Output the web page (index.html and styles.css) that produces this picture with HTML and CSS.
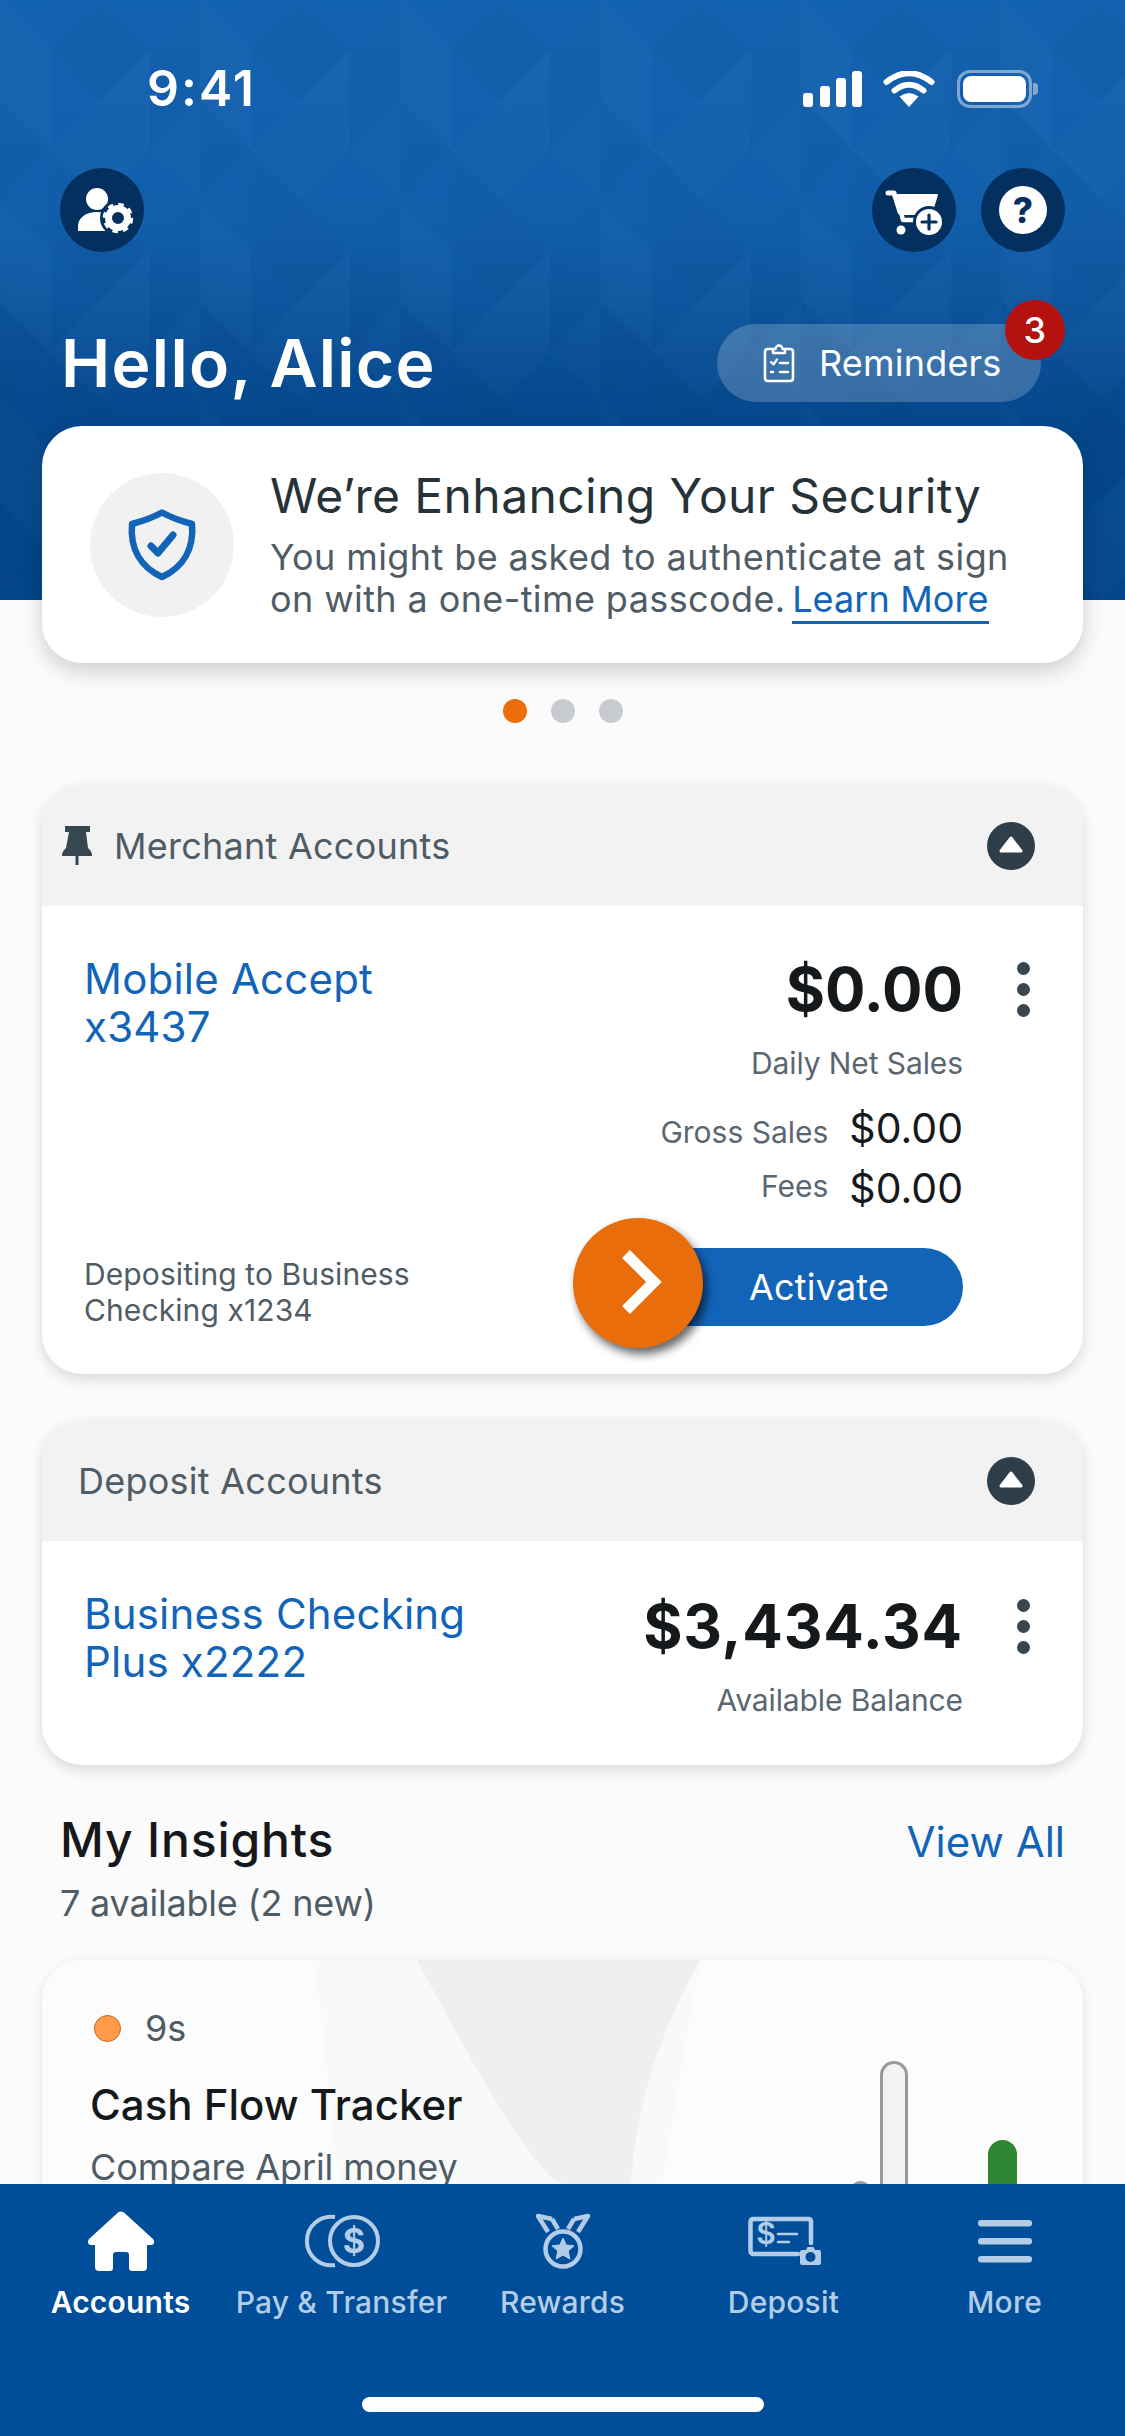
FILE: index.html
```html
<!DOCTYPE html>
<html lang="en">
<head>
<meta charset="utf-8">
<title>Accounts</title>
<link rel="stylesheet" href="styles.css">
</head>
<body>
<div class="app">
  <main class="scroll">
    <header class="hero">
      <svg class="hero-texture" width="1125" height="600" aria-hidden="true">
        <defs>
          <pattern id="facets" width="260" height="260" patternUnits="userSpaceOnUse" patternTransform="scale(.77)">
            <polygon points="130,0 195,65 130,130 65,65" fill="#000" fill-opacity=".028"/>
            <polygon points="0,130 65,65 65,195" fill="#fff" fill-opacity=".018"/>
            <polygon points="260,130 195,65 195,195" fill="#000" fill-opacity=".024"/>
            <polygon points="130,130 195,195 130,260 65,195" fill="#fff" fill-opacity=".016"/>
            <polygon points="0,0 65,65 0,130" fill="#fff" fill-opacity=".014"/>
            <polygon points="260,0 195,65 260,130" fill="#000" fill-opacity=".016"/>
            <polygon points="0,130 65,195 0,260" fill="#000" fill-opacity=".02"/>
            <polygon points="260,130 260,260 195,195" fill="#fff" fill-opacity=".012"/>
            <polygon points="65,0 130,0 65,65" fill="#000" fill-opacity=".012"/>
            <polygon points="130,130 195,65 195,195" fill="#fff" fill-opacity=".014"/>
            <polygon points="65,195 130,260 65,260" fill="#000" fill-opacity=".018"/>
          </pattern>
        </defs>
        <rect width="1125" height="600" fill="url(#facets)"/>
      </svg>
      <div class="status">
        <span class="clock">9:41</span>
        <svg class="signal" width="59" height="36" viewBox="0 0 59 36" aria-hidden="true">
          <g fill="#fff">
            <rect x="0" y="22" width="10" height="14" rx="3"/>
            <rect x="17" y="15" width="10" height="21" rx="3"/>
            <rect x="33" y="7" width="10" height="29" rx="3"/>
            <rect x="49" y="0" width="10" height="36" rx="3"/>
          </g>
        </svg>
        <svg class="wifi" width="52" height="36" viewBox="0 0 52 36" aria-hidden="true">
          <path d="M26 36 L16.5 25.5 Q26 18.5 35.5 25.5 Z" fill="#fff"/>
          <g fill="none" stroke="#fff" stroke-width="6" stroke-linecap="round">
            <path d="M3.5 11 Q26 -6.5 48.5 11"/>
            <path d="M11.5 19.5 Q26 8 40.5 19.5"/>
          </g>
        </svg>
        <span class="battery"><span class="battery-fill"></span></span>
      </div>
      <div class="tools">
        <button class="round-btn" aria-label="Profile settings">
          <svg width="84" height="84" viewBox="0 0 84 84">
            <circle cx="37" cy="31" r="11" fill="#fff"/>
            <path d="M18 63 V58 C18 50 26 44 37 44 C48 44 56 50 56 58 V63 Z" fill="#fff"/>
            <circle cx="58" cy="50" r="18" fill="#03305f"/>
            <circle cx="58" cy="50" r="9.5" fill="none" stroke="#fff" stroke-width="7"/>
            <circle cx="58" cy="50" r="13" fill="none" stroke="#fff" stroke-width="4.5" stroke-dasharray="5.2 5"/>
          </svg>
        </button>
        <div class="tools-right">
          <button class="round-btn" aria-label="Add to cart">
            <svg width="84" height="84" viewBox="0 0 84 84">
              <path d="M16 25 H22 L28 44" fill="none" stroke="#fff" stroke-width="5" stroke-linecap="round" stroke-linejoin="round"/>
              <path d="M25 27 H65 L59 46 H30 Z" fill="#fff" stroke="#fff" stroke-width="2" stroke-linejoin="round"/>
              <path d="M29 44 L31 52 H52" fill="none" stroke="#fff" stroke-width="4.5" stroke-linecap="round" stroke-linejoin="round"/>
              <circle cx="29" cy="62" r="4.5" fill="#fff"/>
              <circle cx="57" cy="54" r="16" fill="#03305f"/>
              <circle cx="57" cy="54" r="13" fill="#fff"/>
              <path d="M50 54 H64 M57 47 V61" stroke="#03305f" stroke-width="3.2" stroke-linecap="round"/>
            </svg>
          </button>
          <button class="round-btn" aria-label="Help"><span class="help-mark">?</span></button>
        </div>
      </div>
      <div class="greet">
        <h1 class="hello">Hello, Alice</h1>
        <div class="reminders">
          <svg width="32" height="40" viewBox="0 0 32 40" aria-hidden="true">
            <path d="M10 6 H5 Q2 6 2 9 V35 Q2 38 5 38 H27 Q30 38 30 35 V9 Q30 6 27 6 H22" fill="none" stroke="#fff" stroke-width="2.6"/>
            <path d="M10 10 V6 H12.5 A3.5 3.5 0 0 1 19.5 6 H22 V10 Z" fill="none" stroke="#fff" stroke-width="2.4" stroke-linejoin="round"/>
            <path d="M8 19 L10.5 21.5 L14 16.5" fill="none" stroke="#fff" stroke-width="2.2" stroke-linecap="round" stroke-linejoin="round"/>
            <path d="M17 20 H25 M17 29 H25 M8 29 H10" stroke="#fff" stroke-width="2.6" stroke-linecap="round"/>
          </svg>
          <span>Reminders</span>
          <span class="badge">3</span>
        </div>
      </div>
    </header>

    <div class="content">
      <section class="promo">
        <div class="promo-icon">
          <svg width="144" height="144" viewBox="0 0 144 144" aria-hidden="true">
            <path d="M72 39.5 C80 44 91 48 102 51 C104 75 94 94 72 104 C50 94 40 75 42 51 C53 48 64 44 72 39.5 Z" fill="none" stroke="#1264b8" stroke-width="6.5" stroke-linejoin="round"/>
            <path d="M61 73 L68 80 L83 62" fill="none" stroke="#1264b8" stroke-width="7" stroke-linecap="round" stroke-linejoin="round"/>
          </svg>
        </div>
        <div class="promo-text">
          <h2 class="promo-title">We’re Enhancing Your Security</h2>
          <p class="promo-body">You might be asked to authenticate at sign<br>on with a one-time passcode. <a class="promo-link">Learn More</a></p>
        </div>
      </section>

      <div class="dots"><span class="dot dot-on"></span><span class="dot"></span><span class="dot"></span></div>

      <section class="card merchant">
        <div class="card-head">
          <svg class="pin" width="30" height="40" viewBox="0 0 30 40" aria-hidden="true">
            <path d="M3 0 H28 V6 H24 L26 22 Q30 25 30 30 H0 Q0 25 4 22 L7 6 H3 Z" fill="#37474f"/>
            <rect x="13.5" y="30" width="3" height="9" fill="#37474f"/>
          </svg>
          <span class="card-title">Merchant Accounts</span>
          <span class="caret"><svg width="48" height="48" viewBox="0 0 48 48" aria-hidden="true"><path d="M24 16 L34 29 H14 Z" fill="#fff" stroke="#fff" stroke-width="3" stroke-linejoin="round"/></svg></span>
        </div>
        <div class="card-body">
          <div class="card-left">
            <a class="acct-name">Mobile Accept<br>x3437</a>
            <p class="deposit-note">Depositing to Business<br>Checking x1234</p>
          </div>
          <div class="card-right">
            <div class="amount">$0.00</div>
            <div class="amount-label">Daily Net Sales</div>
            <div class="sub-row sub-gross"><span class="sub-label">Gross Sales</span><span class="sub-value">$0.00</span></div>
            <div class="sub-row sub-fees"><span class="sub-label">Fees</span><span class="sub-value">$0.00</span></div>
            <button class="activate">Activate
              <span class="swipe"><svg width="130" height="130" viewBox="0 0 130 130" aria-hidden="true"><path d="M53 36 L81 64 L53 92" fill="none" stroke="#fff" stroke-width="11"/></svg></span>
            </button>
          </div>
          <div class="kebab"><i></i><i></i><i></i></div>
        </div>
      </section>

      <section class="card deposit">
        <div class="card-head">
          <span class="card-title">Deposit Accounts</span>
          <span class="caret"><svg width="48" height="48" viewBox="0 0 48 48" aria-hidden="true"><path d="M24 16 L34 29 H14 Z" fill="#fff" stroke="#fff" stroke-width="3" stroke-linejoin="round"/></svg></span>
        </div>
        <div class="card-body deposit-body">
          <div class="card-left">
            <a class="acct-name">Business Checking<br>Plus x2222</a>
          </div>
          <div class="card-right">
            <div class="amount">$3,434.34</div>
            <div class="amount-label">Available Balance</div>
          </div>
          <div class="kebab"><i></i><i></i><i></i></div>
        </div>
      </section>

      <div class="insights-head">
        <h2 class="insights-title">My Insights</h2>
        <a class="view-all">View All</a>
      </div>
      <p class="insights-count">7 available (2 new)</p>

      <section class="insight">
        <svg class="insight-bg" width="1041" height="400" viewBox="0 0 1041 400" aria-hidden="true">
          <path d="M270 0 C285 70 285 150 298 225 L300 400 H590 L658 0 Z" fill="#f8f9f9"/>
          <path d="M375 0 C445 130 505 240 535 225 H589 C595 130 625 60 658 0 Z" fill="#eef0ef"/>
        </svg>
        <div class="age"><span class="age-dot"></span><span>9s</span></div>
        <h3 class="insight-title">Cash Flow Tracker</h3>
        <p class="insight-text">Compare April money</p>
        <div class="bars">
          <span class="bar bar-ghost" style="height:179px;width:21px"></span>
          <span class="bar bar-ghost" style="height:299px;width:28px"></span>
          <span class="bar bar-green" style="height:220px;width:29px"></span>
        </div>
      </section>
    </div>
  </main>

  <nav class="tabbar">
    <div class="tabs">
      <a class="tab tab-on">
        <svg width="80" height="60" viewBox="0 0 80 60" aria-hidden="true">
          <path fill-rule="evenodd" fill="#fff" d="M37 1.5 Q40 -0.5 43 1.5 L72 28 Q75 33 70 34 H66 V56 Q66 60 62 60 H51 Q48 60 48 57 V44 Q48 41 45 41 H35 Q32 41 32 44 V57 Q32 60 29 60 H18 Q14 60 14 56 V34 H10 Q5 33 8 28 Z"/>
        </svg>
        <span>Accounts</span>
      </a>
      <a class="tab">
        <svg width="80" height="60" viewBox="0 0 80 60" aria-hidden="true">
          <circle cx="52" cy="30" r="24" fill="none" stroke="#b3cde8" stroke-width="4"/>
          <path d="M33 6 A24.3 24.3 0 1 0 33 54" fill="none" stroke="#b3cde8" stroke-width="4"/>
          <text x="52" y="42" class="glyph-dollar">$</text>
        </svg>
        <span>Pay &amp; Transfer</span>
      </a>
      <a class="tab">
        <svg width="80" height="60" viewBox="0 0 80 60" aria-hidden="true">
          <g fill="none" stroke="#b3cde8" stroke-width="4.5" stroke-linejoin="round">
            <path d="M29 8 L15 5 L25 21"/>
            <path d="M29 8 L35 18"/>
            <path d="M51 8 L65 5 L55 21"/>
            <path d="M51 8 L45 18"/>
            <circle cx="40" cy="38" r="17.5"/>
          </g>
          <path d="M40 27 L43.2 34 L51 34.8 L45.2 40 L46.8 48 L40 44 L33.2 48 L34.8 40 L29 34.8 L36.8 34 Z" fill="#b3cde8" stroke="#b3cde8" stroke-linejoin="round"/>
        </svg>
        <span>Rewards</span>
      </a>
      <a class="tab">
        <svg width="80" height="60" viewBox="0 0 80 60" aria-hidden="true">
          <path d="M54 43 H10 Q6.5 43 6.5 39.5 V11 Q6.5 8 10 8 H64 Q67 8 67 11 V32" fill="none" stroke="#b3cde8" stroke-width="4.5" stroke-linecap="round"/>
          <text x="22" y="33" class="glyph-dollar glyph-small">$</text>
          <path d="M34 23 H53 M34 31 H45" stroke="#b3cde8" stroke-width="2.6" stroke-linecap="round"/>
          <path d="M58 39 H62 L63.5 36 H69.5 L71 39 H75 Q77 39 77 41 V52 Q77 54 75 54 H58 Q56 54 56 52 V41 Q56 39 58 39 Z" fill="#b3cde8"/>
          <circle cx="66.5" cy="46" r="5" fill="#004e99"/>
        </svg>
        <span>Deposit</span>
      </a>
      <a class="tab">
        <svg width="80" height="60" viewBox="0 0 80 60" aria-hidden="true">
          <g fill="#b3cde8">
            <rect x="13" y="9" width="54" height="6.5" rx="3"/>
            <rect x="13" y="27" width="54" height="6.5" rx="3"/>
            <rect x="13" y="45" width="54" height="6.5" rx="3"/>
          </g>
        </svg>
        <span>More</span>
      </a>
    </div>
    <div class="home-indicator"></div>
  </nav>
</div>
</body>
</html>
```

FILE: styles.css
```css
* { box-sizing: border-box; }
html, body { margin: 0; padding: 0; }
body { font-family: Inter, "Liberation Sans", sans-serif; background: #fbfbfb; color: #16191c; }
h1, h2, h3, p { margin: 0; font-weight: inherit; }
a { color: inherit; text-decoration: none; }
button { font: inherit; border: 0; padding: 0; margin: 0; color: inherit; }

.app { width: 1125px; height: 2436px; display: flex; flex-direction: column; overflow: hidden; }
.scroll { flex: 1; min-height: 0; overflow: hidden; }

/* Header */
.hero { position: relative; height: 600px; padding-top: 59px; background: linear-gradient(180deg, #1463b1 0%, #115daa 40%, #0d569f 50%, #05498e 67%, #03468a 100%); color: #fff; }
.hero-texture { position: absolute; left: 0; top: 0; }
.status, .tools, .greet { position: relative; }
.status { display: flex; align-items: center; height: 58px; padding: 0 93px 0 147px; }
.clock { font-size: 50px; font-weight: 600; line-height: 58px; letter-spacing: 2px; margin-right: auto; }
.signal { margin-top: 2px; }
.wifi { margin: 2px 0 0 21px; }
.battery { position: relative; display: block; width: 75px; height: 38px; margin: 2px 0 0 22px; padding: 3px; border: 3px solid rgba(255, 255, 255, .45); border-radius: 13px; }
.battery::after { content: ""; position: absolute; right: -9px; top: 10px; width: 5px; height: 12px; background: rgba(255, 255, 255, .45); border-radius: 0 4px 4px 0; }
.battery-fill { display: block; height: 100%; background: #fff; border-radius: 8px; }

.tools { display: flex; justify-content: space-between; margin-top: 51px; padding: 0 60px; }
.tools-right { display: flex; gap: 25px; }
.round-btn { width: 84px; height: 84px; border-radius: 50%; background: #03305f; display: flex; align-items: center; justify-content: center; }
.help-mark { width: 48px; height: 48px; border-radius: 50%; background: #fff; color: #03305f; font-size: 35px; font-weight: 800; line-height: 48px; text-align: center; }

.greet { display: flex; justify-content: space-between; align-items: center; margin-top: 72px; padding: 0 84px 0 61px; }
.hello { font-size: 66px; font-weight: 600; line-height: 78px; letter-spacing: 1.3px; }
.reminders { position: relative; display: flex; align-items: center; gap: 24px; width: 324px; height: 78px; padding-left: 46px; border-radius: 39px; background: rgba(255, 255, 255, .2); font-size: 36px; letter-spacing: .2px; }
.badge { position: absolute; right: -24px; top: -24px; width: 60px; height: 60px; border-radius: 50%; background: #b5120f; font-size: 36px; font-weight: 500; line-height: 60px; text-align: center; }

/* Content */
.content { position: relative; margin-top: -174px; padding: 0 42px; }
.promo { display: flex; align-items: center; gap: 36px; height: 237px; padding: 0 0 3px 48px; background: #fff; border-radius: 40px; box-shadow: 0 8px 22px rgba(0, 0, 0, .18); }
.promo-icon { flex: none; width: 144px; height: 144px; margin-top: 3px; border-radius: 50%; background: #f1f1f1; }
.promo-title { margin-bottom: 11px; font-size: 48px; font-weight: 400; line-height: 58px; letter-spacing: .4px; color: #263238; }
.promo-body { font-size: 36px; line-height: 42px; letter-spacing: .4px; color: #505c65; }
.promo-link { margin-left: -4px; color: #1264b8; border-bottom: 3px solid #1264b8; letter-spacing: .1px; }

.dots { display: flex; justify-content: center; gap: 24px; margin-top: 36px; }
.dot { width: 24px; height: 24px; border-radius: 50%; background: #c7cbd0; }
.dot-on { background: #ec6d0a; }

.card { background: #fff; border-radius: 40px; overflow: hidden; box-shadow: 0 5px 14px rgba(0, 0, 0, .14); }
.merchant { margin-top: 62px; }
.deposit { margin-top: 46px; }
.card-head { display: flex; align-items: center; height: 121px; padding: 0 48px 0 36px; background: #f2f2f2; }
.pin { margin: 0 0 0 -16px; }
.merchant .card-title { margin-left: 22px; }
.card-title { flex: 1; font-size: 36px; line-height: 44px; letter-spacing: .25px; color: #505c65; }
.caret { width: 48px; height: 48px; border-radius: 50%; background: #2f3e4b; }
.caret svg { display: block; }

.card-body { display: flex; padding: 47px 52px 48px 42px; }
.deposit-body { padding: 49px 52px 47px 42px; }
.card-left { flex: 1; display: flex; flex-direction: column; justify-content: space-between; }
.acct-name { margin-top: 2px; font-size: 42px; line-height: 48px; letter-spacing: .2px; color: #1264b8; }
.deposit-body .acct-name { margin-top: 0; }
.deposit-note { margin-bottom: -2px; font-size: 30px; line-height: 36px; letter-spacing: .1px; color: #505c65; }
.card-right { display: flex; flex-direction: column; align-items: flex-end; }
.amount { font-size: 60px; font-weight: 700; line-height: 72px; color: #16191c; }
.deposit-body .amount { letter-spacing: .8px; }
.amount-label { margin-top: 20px; font-size: 30px; line-height: 36px; letter-spacing: -.1px; color: #5a6670; }
.sub-row { display: flex; align-items: flex-start; gap: 21px; height: 50px; }
.sub-gross { margin-top: 22px; }
.sub-fees { margin-top: 10px; }
.sub-label { font-size: 30px; color: #5a6670; }
.sub-gross .sub-label { line-height: 58px; }
.sub-fees .sub-label { line-height: 46px; }
.sub-value { font-size: 41px; line-height: 50px; color: #16191c; }

.activate { position: relative; width: 324px; height: 78px; margin-top: 35px; padding: 0 0 0 110px; border-radius: 39px; background: #1264b8; color: #fff; font-size: 36px; line-height: 78px; letter-spacing: .2px; text-align: left; }
.swipe { position: absolute; left: -66px; top: -30px; width: 130px; height: 130px; border-radius: 50%; background: #ea6d0c; box-shadow: 4px 6px 10px rgba(0, 0, 0, .6); }
.swipe svg { display: block; }

.kebab { flex: none; display: flex; flex-direction: column; gap: 8px; width: 14px; margin: 9px 0 0 54px; }
.kebab i { display: block; width: 13px; height: 13px; border-radius: 50%; background: #37474f; }

/* Insights */
.insights-head { display: flex; justify-content: space-between; align-items: baseline; margin-top: 47px; padding: 0 18px; }
.insights-title { font-size: 48px; font-weight: 500; line-height: 56px; letter-spacing: .85px; color: #16191c; }
.view-all { font-size: 42px; color: #1264b8; }
.insights-count { margin: 15px 0 0 18px; font-size: 36px; line-height: 40px; letter-spacing: -.2px; color: #505c65; }

.insight { position: relative; height: 400px; margin-top: 37px; padding: 46px 0 0 48px; background: #fcfcfc; border-radius: 40px 40px 0 0; overflow: hidden; box-shadow: 0 3px 12px rgba(0, 0, 0, .1); }
.insight-bg { position: absolute; left: 0; top: 0; }
.age, .insight-title, .insight-text { position: relative; }
.age { display: flex; align-items: center; gap: 24px; padding-left: 4px; font-size: 36px; line-height: 44px; color: #505c65; }
.age-dot { width: 27px; height: 27px; border-radius: 50%; background: #ff9b4b; border: 1.5px solid #c8641a; }
.insight-title { margin-top: 30px; font-size: 42px; font-weight: 500; line-height: 50px; color: #16191c; }
.insight-text { margin-top: 15px; font-size: 36px; line-height: 44px; letter-spacing: -.1px; color: #505c65; }
.bars { position: absolute; right: 66px; bottom: 0; display: flex; align-items: flex-end; }
.bar { display: block; border-radius: 15px 15px 0 0; }
.bar-ghost { background: #f2f2f2; border: 3px solid #999; border-bottom: 0; margin-right: 9px; }
.bar-ghost + .bar-ghost { margin-right: 80px; }
.bar-green { background: #2e8532; }

/* Tab bar */
.tabbar { flex: none; height: 252px; padding-top: 27px; background: #004e99; display: flex; flex-direction: column; align-items: center; }
.tabs { display: flex; width: 100%; padding: 0 10px; }
.tab { flex: 0 0 221px; display: flex; flex-direction: column; align-items: center; gap: 13px; color: #b3cde8; font-size: 30px; font-weight: 500; line-height: 36px; letter-spacing: .2px; white-space: nowrap; }
.tab svg { display: block; }
.tab-on { color: #fff; font-weight: 600; }
.glyph-dollar { font-family: Inter, sans-serif; font-size: 34px; font-weight: 700; fill: #b3cde8; text-anchor: middle; }
.glyph-small { font-size: 30px; font-weight: 600; }
.home-indicator { width: 402px; height: 15px; margin-top: 77px; border-radius: 8px; background: #fff; }
```
